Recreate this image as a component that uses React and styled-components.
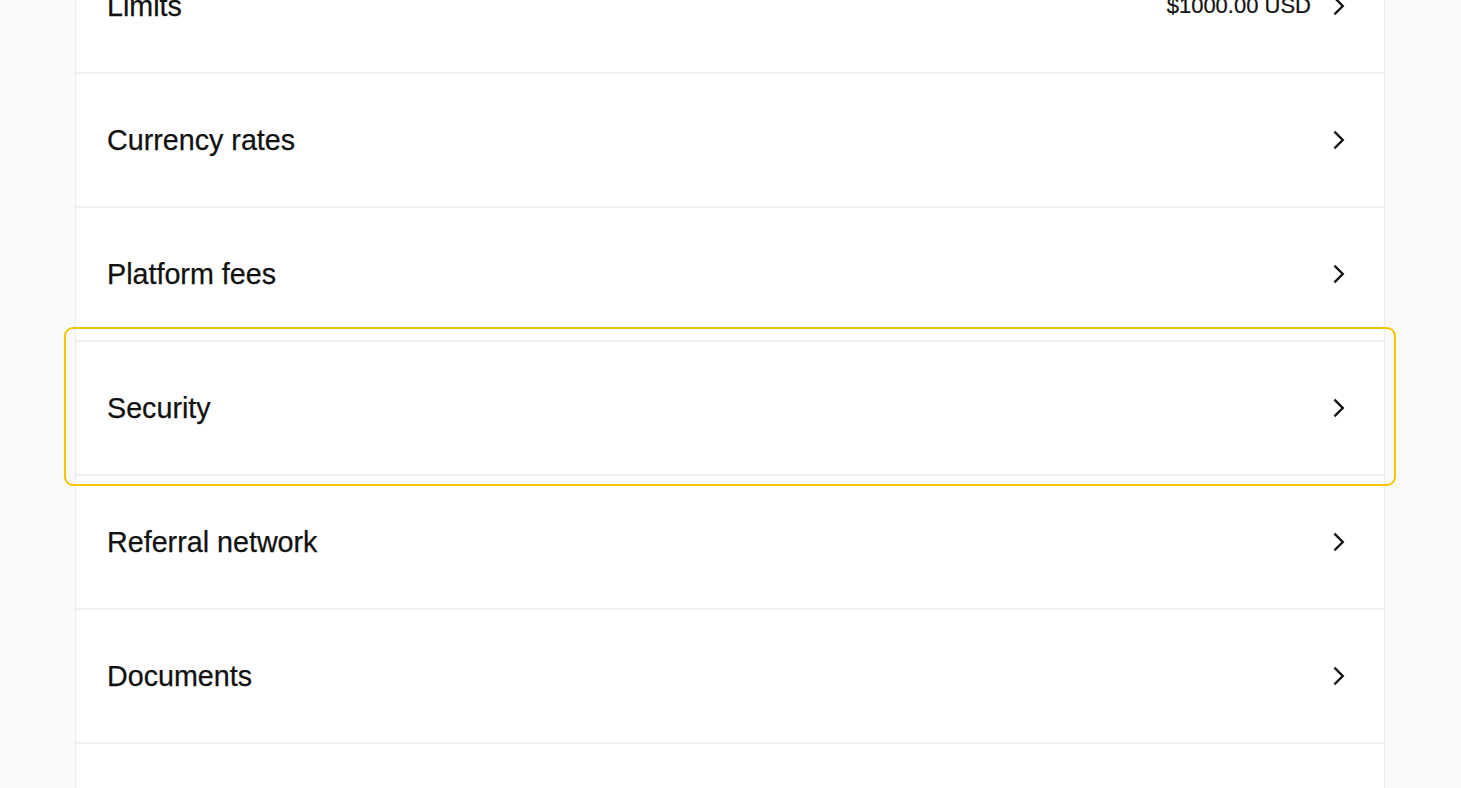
import styled, { createGlobalStyle } from 'styled-components';

const GlobalStyle = createGlobalStyle`
	html, body {
		margin: 0;
		padding: 0;
		background: #f9f9f9;
		overflow: hidden;
	}
	body {
		font-family: 'Liberation Sans', Arial, sans-serif;
		color: #111111;
	}
`;

const Page = styled.div`
	display: flex;
	height: 788px;
	padding: 0 76px 0 75px;
	overflow: hidden;
`;

const Panel = styled.div`
	flex: 1 1 auto;
	margin-top: -60px;
	background: #ffffff;
	border-left: 1px solid #ededed;
	border-right: 1px solid #ededed;
	display: flex;
	flex-direction: column;
`;

const Row = styled.div`
	position: relative;
	display: flex;
	align-items: center;
	height: 132px;
	flex: 0 0 auto;
	padding: 0 33px 0 31px;
	border-bottom: 2px solid #f1f1f1;
	cursor: pointer;

	${(p) =>
		p.$focused &&
		`
		&::after {
			content: '';
			position: absolute;
			top: -15px;
			bottom: -12px;
			left: -12px;
			right: -12px;
			border: 2.5px solid #f6c500;
			border-radius: 9px;
			pointer-events: none;
		}
	`}
`;

const Label = styled.span`
	flex: 1 1 auto;
	font-size: 28.7px;
	line-height: 1;
	-webkit-text-stroke: 0.25px #111111;
`;

const Value = styled.span`
	font-size: 22px;
	line-height: 1;
	margin-right: 16px;
	-webkit-text-stroke: 0.2px #111111;
`;

const Chevron = styled.svg`
	width: 24px;
	height: 24px;
	flex: 0 0 auto;
`;

const ChevronIcon = () => (
	<Chevron viewBox="0 0 24 24" fill="none">
		<path
			d="M8.2 4.4 L15.8 12 L8.2 19.6"
			stroke="#111111"
			strokeWidth="2.3"
			strokeLinecap="square"
			strokeLinejoin="miter"
		/>
	</Chevron>
);

const items = [
	{ label: 'Limits', value: '$1000.00 USD' },
	{ label: 'Currency rates' },
	{ label: 'Platform fees' },
	{ label: 'Security', focused: true },
	{ label: 'Referral network' },
	{ label: 'Documents' },
	{ label: '' },
];

export default function App() {
	return (
		<>
			<GlobalStyle />
			<Page>
				<Panel>
					{items.map((item, index) => (
						<Row key={index} $focused={item.focused}>
							<Label>{item.label}</Label>
							{item.value && <Value>{item.value}</Value>}
							{item.label && <ChevronIcon />}
						</Row>
					))}
				</Panel>
			</Page>
		</>
	);
}
